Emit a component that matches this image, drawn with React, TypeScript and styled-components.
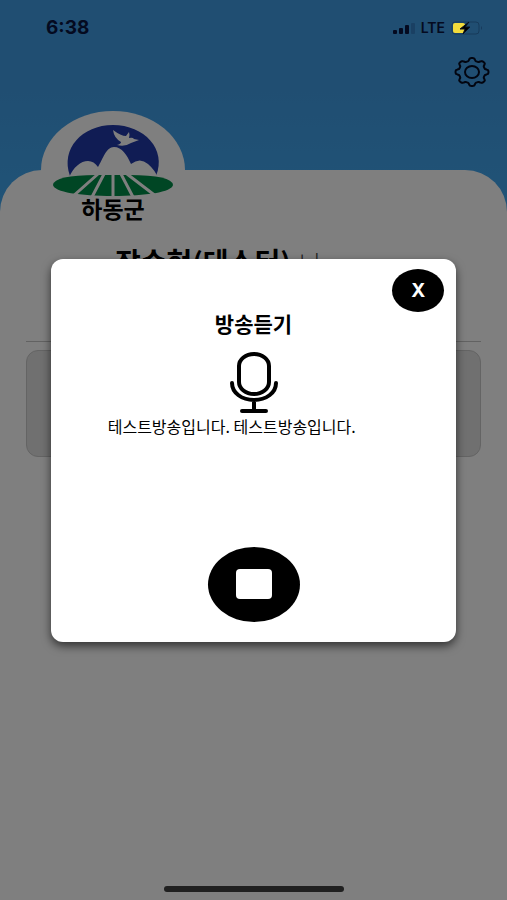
import React from "react";
import styled, { createGlobalStyle } from "styled-components";

const GlobalStyle = createGlobalStyle`
  *, *::before, *::after { box-sizing: border-box; }
  body {
    margin: 0;
    font-family: "Noto Sans CJK KR", "Noto Sans", sans-serif;
    color: #000;
  }
  button { font: inherit; border: 0; padding: 0; cursor: pointer; }
`;

const Screen = styled.div`
  position: relative;
  display: flex;
  flex-direction: column;
  min-height: 100vh;
  background: linear-gradient(#409ce4 0, #409ce4 80px, #40a6ee 200px);
`;

const StatusBar = styled.header`
  position: relative;
  z-index: 3;
  display: flex;
  align-items: center;
  justify-content: space-between;
  height: 56px;
  padding: 0 24px 0 46px;
  color: #040a20;
`;

const Clock = styled.time`
  font: 700 19px/24px Inter, sans-serif;
`;

const Indicators = styled.div`
  display: flex;
  align-items: center;
  gap: 6px;
  font: 600 14px/20px Inter, sans-serif;
`;

const Toolbar = styled.nav`
  display: flex;
  justify-content: flex-end;
  height: 114px;
  padding: 0 17px;
`;

const SettingsButton = styled.button`
  width: 36px;
  height: 32px;
  background: none;
`;

const Sheet = styled.main`
  flex: 1;
  display: flex;
  flex-direction: column;
  padding: 0 26px;
  border-radius: 42px 42px 0 0;
  background: #fff;
`;

const Emblem = styled.figure`
  width: 144px;
  height: 118px;
  margin: -59px 0 0 15px;
  padding-top: 14px;
  border-radius: 50%;
  background: #fff;
  text-align: center;
`;

const EmblemArt = styled.svg`
  display: block;
  width: 122px;
  height: 72px;
  margin: 0 auto;
`;

const EmblemName = styled.figcaption`
  font-size: 23px;
  font-weight: 700;
  line-height: 22px;
`;

const Greeting = styled.h1`
  margin: 0;
  padding: 12px 0 0 89px;
  font-size: 28px;
  line-height: 40px;
  font-weight: 700;
`;

const Honorific = styled.span`
  margin-left: 8px;
  font-size: 24px;
  font-weight: 300;
  color: #444;
`;

const Divider = styled.hr`
  width: 100%;
  margin: 58px 0 8px;
  border: 0;
  border-top: 1px solid #c4c4c4;
`;

const Card = styled.section`
  height: 107px;
  border: 1px solid #c8c8c8;
  border-radius: 12px;
  background: #e0e0e0;
`;

const Backdrop = styled.div`
  position: absolute;
  inset: 0;
  z-index: 2;
  display: flex;
  align-items: center;
  justify-content: center;
  background: rgba(0, 0, 0, 0.5);
`;

const Dialog = styled.section`
  display: flex;
  flex-direction: column;
  align-items: center;
  width: 80%;
  min-height: 383px;
  padding: 10px 12px 20px;
  border-radius: 12px;
  background: #fff;
  box-shadow: 0 4px 10px rgba(0, 0, 0, 0.6);
`;

const CloseButton = styled.button`
  align-self: flex-end;
  width: 52px;
  height: 43px;
  border-radius: 50%;
  background: #000;
  color: #fff;
  font: 700 19px/43px Inter, sans-serif;
`;

const Title = styled.h2`
  margin: 0;
  font-size: 21px;
  line-height: 22px;
  font-weight: 700;
`;

const MicIcon = styled.svg`
  width: 50px;
  height: 62px;
  margin-top: 18px;
`;

const Message = styled.p`
  align-self: flex-start;
  margin: 0 45px;
  font-size: 16px;
  line-height: 24px;
`;

const StopButton = styled.button`
  display: grid;
  place-items: center;
  width: 92px;
  height: 75px;
  margin-top: auto;
  border-radius: 50%;
  background: #000;
`;

const StopMark = styled.span`
  width: 36px;
  height: 30px;
  border-radius: 4px;
  background: #fff;
`;

const HomeIndicator = styled.div`
  position: absolute;
  z-index: 3;
  bottom: 8px;
  left: 50%;
  width: 180px;
  height: 6px;
  margin-left: -90px;
  border-radius: 3px;
  background: #202020;
`;

const Signal = () => (
  <svg width="22" height="12" viewBox="0 0 22 12" aria-hidden="true">
    <rect x="0" y="8" width="4" height="4" rx="1" fill="#040a20" />
    <rect x="6" y="6" width="4" height="6" rx="1" fill="#040a20" />
    <rect x="12" y="3" width="4" height="9" rx="1" fill="#040a20" />
    <rect x="18" y="1" width="4" height="11" rx="1" fill="#1a4063" />
  </svg>
);

const Battery = () => (
  <svg width="32" height="14" viewBox="0 0 32 14" aria-hidden="true">
    <rect x="1" y="1" width="27" height="12" rx="3" fill="none" stroke="#173a5a" />
    <path d="M30 5q2 2 0 4z" fill="#173a5a" />
    <rect x="2" y="2" width="12" height="10" rx="2" fill="#f2dc3c" />
    <path d="M18 1L9 8h5l-2 5L19 6h-5z" fill="#000" stroke="#0a1220" />
  </svg>
);

const Gear = () => {
  const steps = 96;
  const points = Array.from({ length: steps }, (_, i) => {
    const a = (i / steps) * Math.PI * 2;
    const k = 0.9 + 0.1 * Math.tanh(2.2 * Math.cos(8 * a));
    return `${(18 + 16.5 * k * Math.cos(a)).toFixed(2)},${(16 + 14 * k * Math.sin(a)).toFixed(2)}`;
  });
  return (
    <svg width="36" height="32" viewBox="0 0 36 32" fill="none" stroke="#040a20" strokeWidth="2" strokeLinejoin="round" aria-hidden="true">
      <polygon points={points.join(" ")} />
      <ellipse cx="18" cy="16" rx="7" ry="6" />
    </svg>
  );
};

const CountyEmblem = () => (
  <EmblemArt viewBox="0 0 122 72" aria-hidden="true">
    <path d="M18 51C8 24 30 0 61 0s54 24 43 51z" fill="#2038a8" />
    <path d="M17 53C21 42 29 36 36 36q6 0 10 6C51 34 54 22 62 22s13 8 17 17q9-7 17 0 7 6 10 14z" fill="#fff" />
    <path d="M61 5q8 6 13 6l3-4q1 3 0 6 4-1 5 1l5 1-8 3q-6 4-14 2 4-1 4-3-7-4-8-12z" fill="#fff" />
    <path d="M1 60Q2 50 45 50h32q43 0 44 10C120 67 94 71 61 71S2 67 1 60z" fill="#008c48" />
    <path d="M46 49L20 72M52 49L40 72M61 49v23M69 49l12 23M75 49l30 23" stroke="#fff" strokeWidth="3" />
  </EmblemArt>
);

export default function App() {
  return (
    <Screen>
      <GlobalStyle />
      <StatusBar>
        <Clock>6:38</Clock>
        <Indicators>
          <Signal />
          <span>LTE</span>
          <Battery />
        </Indicators>
      </StatusBar>
      <Toolbar>
        <SettingsButton type="button" aria-label="설정">
          <Gear />
        </SettingsButton>
      </Toolbar>
      <Sheet>
        <Emblem>
          <CountyEmblem />
          <EmblemName>하동군</EmblemName>
        </Emblem>
        <Greeting>
          장수현(테스터)<Honorific>님</Honorific>
        </Greeting>
        <Divider />
        <Card />
      </Sheet>
      <Backdrop>
        <Dialog role="dialog" aria-modal="true" aria-labelledby="broadcast-title">
          <CloseButton type="button" aria-label="닫기">X</CloseButton>
          <Title id="broadcast-title">방송듣기</Title>
          <MicIcon viewBox="0 0 50 62" fill="none" stroke="#000" strokeWidth="4" strokeLinecap="round" aria-hidden="true">
            <rect x="10" y="2" width="30" height="40" rx="15" ry="12" />
            <path d="M3 31c0 10 10 17 22 17s22-7 22-17M25 48v11M13 59h24" />
          </MicIcon>
          <Message>테스트방송입니다. 테스트방송입니다.</Message>
          <StopButton type="button" aria-label="정지">
            <StopMark />
          </StopButton>
        </Dialog>
      </Backdrop>
      <HomeIndicator />
    </Screen>
  );
}
